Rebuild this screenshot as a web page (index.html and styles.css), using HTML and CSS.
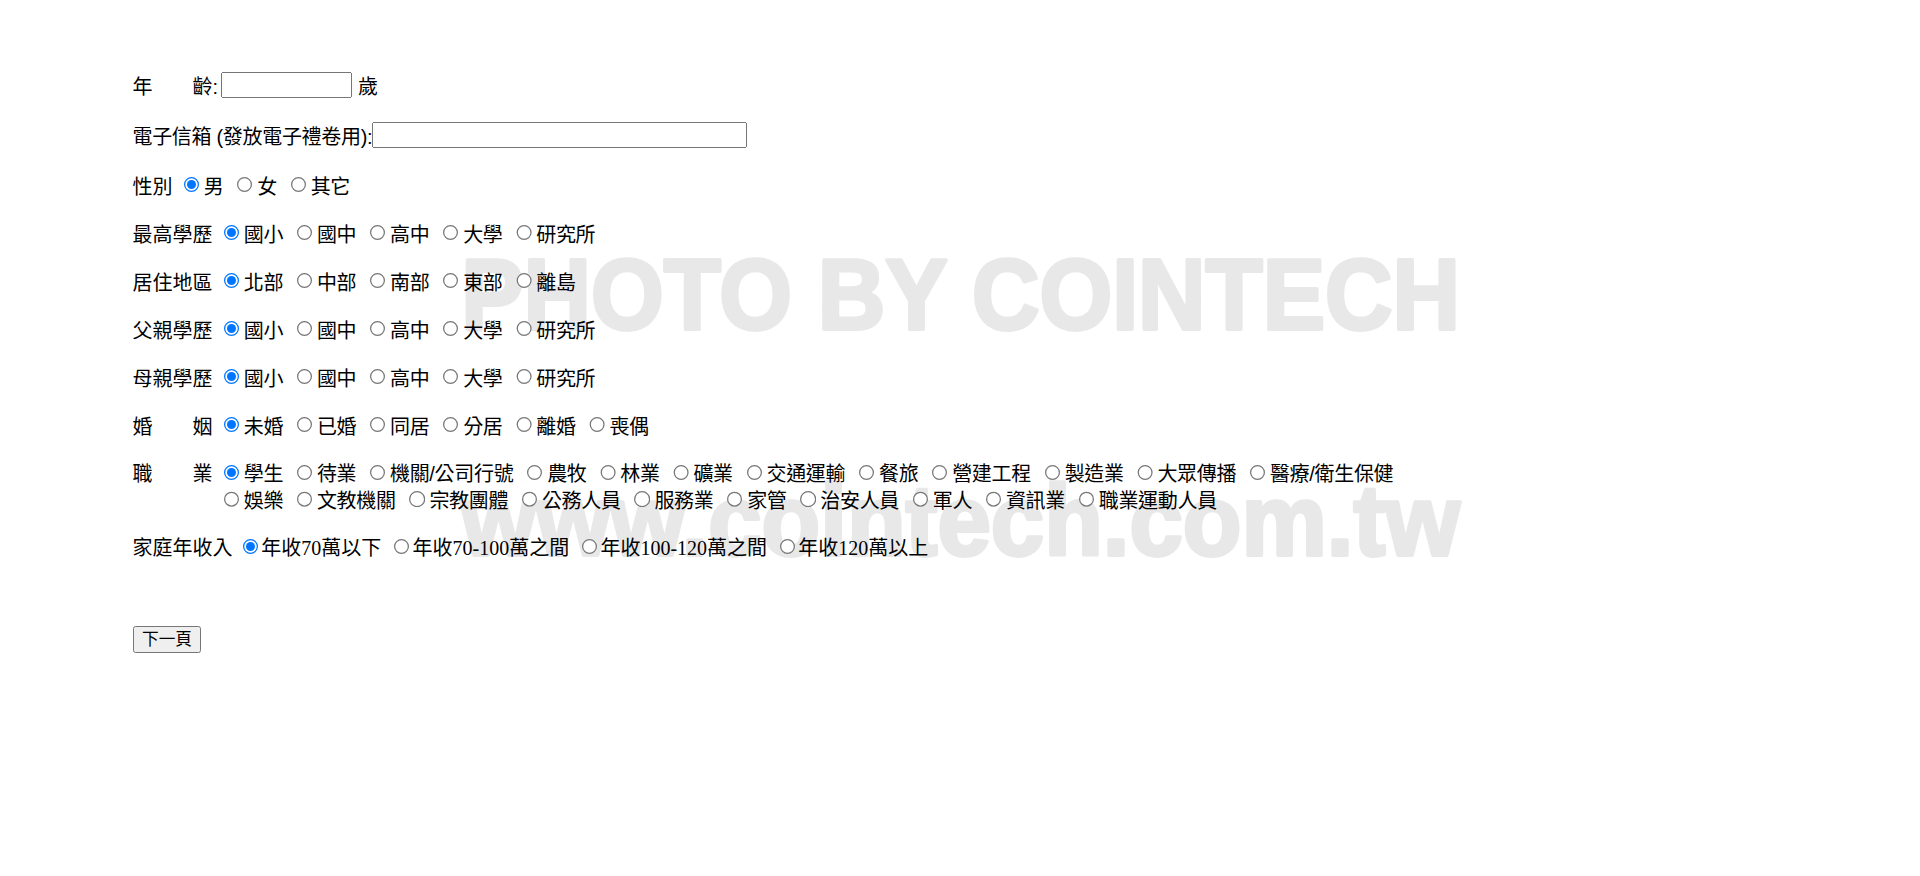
FILE: index.html
```html
<!DOCTYPE html>
<html lang="zh-Hant">
<head>
<meta charset="utf-8">
<title>問卷</title>
<link rel="stylesheet" href="styles.css">
</head>
<body>
<svg class="watermark" width="1536" height="700" viewBox="0 0 1536 700" aria-hidden="true">
  <text x="369" y="263" textLength="799" lengthAdjust="spacingAndGlyphs" class="wm-text">PHOTO BY COINTECH</text>
  <text x="369" y="444" textLength="799" lengthAdjust="spacingAndGlyphs" class="wm-text">www.cointech.com.tw</text>
</svg>
<form class="form">
  <div class="row row-input">
    <span class="lbl-age">年　　齡:</span><input class="txt age" type="text"><span class="unit">歲</span>
  </div>
  <div class="row row-input row-email">
    <span class="lbl-email">電子信箱 (發放電子禮卷用):</span><input class="txt email" type="text">
  </div>
  <div class="row">
    <span class="lbl">性別</span>
    <label class="opt"><input type="radio" name="sex" checked>男</label>
    <label class="opt"><input type="radio" name="sex">女</label>
    <label class="opt"><input type="radio" name="sex">其它</label>
  </div>
  <div class="row">
    <span class="lbl">最高學歷</span>
    <label class="opt"><input type="radio" name="edu" checked>國小</label>
    <label class="opt"><input type="radio" name="edu">國中</label>
    <label class="opt"><input type="radio" name="edu">高中</label>
    <label class="opt"><input type="radio" name="edu">大學</label>
    <label class="opt"><input type="radio" name="edu">研究所</label>
  </div>
  <div class="row">
    <span class="lbl">居住地區</span>
    <label class="opt"><input type="radio" name="area" checked>北部</label>
    <label class="opt"><input type="radio" name="area">中部</label>
    <label class="opt"><input type="radio" name="area">南部</label>
    <label class="opt"><input type="radio" name="area">東部</label>
    <label class="opt"><input type="radio" name="area">離島</label>
  </div>
  <div class="row">
    <span class="lbl">父親學歷</span>
    <label class="opt"><input type="radio" name="fedu" checked>國小</label>
    <label class="opt"><input type="radio" name="fedu">國中</label>
    <label class="opt"><input type="radio" name="fedu">高中</label>
    <label class="opt"><input type="radio" name="fedu">大學</label>
    <label class="opt"><input type="radio" name="fedu">研究所</label>
  </div>
  <div class="row">
    <span class="lbl">母親學歷</span>
    <label class="opt"><input type="radio" name="medu" checked>國小</label>
    <label class="opt"><input type="radio" name="medu">國中</label>
    <label class="opt"><input type="radio" name="medu">高中</label>
    <label class="opt"><input type="radio" name="medu">大學</label>
    <label class="opt"><input type="radio" name="medu">研究所</label>
  </div>
  <div class="row">
    <span class="lbl">婚　　姻</span>
    <label class="opt"><input type="radio" name="mar" checked>未婚</label>
    <label class="opt"><input type="radio" name="mar">已婚</label>
    <label class="opt"><input type="radio" name="mar">同居</label>
    <label class="opt"><input type="radio" name="mar">分居</label>
    <label class="opt"><input type="radio" name="mar">離婚</label>
    <label class="opt"><input type="radio" name="mar">喪偶</label>
  </div>
  <div class="row row-multi">
    <span class="lbl">職　　業</span>
    <div class="lines">
      <div class="line">
        <label class="opt"><input type="radio" name="job" checked>學生</label>
        <label class="opt"><input type="radio" name="job">待業</label>
        <label class="opt"><input type="radio" name="job">機關/公司行號</label>
        <label class="opt"><input type="radio" name="job">農牧</label>
        <label class="opt"><input type="radio" name="job">林業</label>
        <label class="opt"><input type="radio" name="job">礦業</label>
        <label class="opt"><input type="radio" name="job">交通運輸</label>
        <label class="opt"><input type="radio" name="job">餐旅</label>
        <label class="opt"><input type="radio" name="job">營建工程</label>
        <label class="opt"><input type="radio" name="job">製造業</label>
        <label class="opt"><input type="radio" name="job">大眾傳播</label>
        <label class="opt"><input type="radio" name="job">醫療/衛生保健</label>
      </div>
      <div class="line">
        <label class="opt"><input type="radio" name="job">娛樂</label>
        <label class="opt"><input type="radio" name="job">文教機關</label>
        <label class="opt"><input type="radio" name="job">宗教團體</label>
        <label class="opt"><input type="radio" name="job">公務人員</label>
        <label class="opt"><input type="radio" name="job">服務業</label>
        <label class="opt"><input type="radio" name="job">家管</label>
        <label class="opt"><input type="radio" name="job">治安人員</label>
        <label class="opt"><input type="radio" name="job">軍人</label>
        <label class="opt"><input type="radio" name="job">資訊業</label>
        <label class="opt"><input type="radio" name="job">職業運動人員</label>
      </div>
    </div>
  </div>
  <div class="row row-income">
    <span class="lbl">家庭年收入</span>
    <label class="opt"><input type="radio" name="inc" checked>年收70萬以下</label>
    <label class="opt"><input type="radio" name="inc">年收70-100萬之間</label>
    <label class="opt"><input type="radio" name="inc">年收100-120萬之間</label>
    <label class="opt"><input type="radio" name="inc">年收120萬以上</label>
  </div>
  <div class="row-btn">
    <button type="button" class="btn">下一頁</button>
  </div>
</form>
</body>
</html>
```
FILE: styles.css
```css
html {
  zoom: 1.25;
  background: #fff;
}
body {
  margin: 0;
  position: relative;
  color: #000;
  font-family: "Liberation Sans", "Noto Sans CJK TC", sans-serif;
  font-size: 16px;
}
.form {
  position: relative;
  z-index: 1;
  display: flex;
  flex-direction: column;
  padding: 56px 0 0 106px;
}
.row {
  display: flex;
  align-items: center;
  height: 22px;
  margin-bottom: 16.4px;
  white-space: nowrap;
}
.row-input {
  height: 24px;
  margin-bottom: 16px;
}
.row-email {
  margin-bottom: 17px;
}
.lbl-email {
  letter-spacing: -0.25px;
}
.row-multi {
  height: auto;
  align-items: flex-start;
  margin-bottom: 16px;
}
.lines {
  display: flex;
  flex-direction: column;
}
.line {
  display: flex;
  align-items: center;
  height: 21.5px;
}
.row-multi .lbl {
  height: 21.5px;
  display: flex;
  align-items: center;
}
.row-income {
  font-family: "Liberation Serif", "Noto Sans CJK TC", serif;
  margin-bottom: 52.6px;
}
.row-income .lbl {
  font-family: "Liberation Sans", "Noto Sans CJK TC", sans-serif;
  margin-right: 3px;
}
.lbl {
  margin-right: 4px;
}
.opt {
  display: inline-flex;
  align-items: center;
  margin-right: 6px;
  letter-spacing: -0.25px;
}
.opt input {
  margin: 0 3px 0 5px;
  width: 13px;
  height: 13px;
}
.row-income .opt {
  margin-right: 5px;
  letter-spacing: 0;
}
.row-income .opt input {
  margin-right: 2px;
}
.txt {
  box-sizing: border-box;
  height: 21px;
  margin: 0 0 0 2px;
  font-size: 13.33px;
}
.age {
  width: 105px;
}
.email {
  width: 300px;
  margin-left: 0;
}
.unit {
  margin-left: 5px;
}
.row-btn {
  display: flex;
}
.btn {
  font-family: "Liberation Sans", "Noto Sans CJK TC", sans-serif;
  font-size: 13.33px;
  height: 21px;
  padding: 0 6px;
  line-height: 17px;
}
.watermark {
  position: absolute;
  left: 0;
  top: 0;
  z-index: 0;
  pointer-events: none;
}
.wm-text {
  font-family: "Liberation Sans", sans-serif;
  font-weight: 700;
  font-size: 80px;
  fill: #e8e8e8;
  stroke: #e8e8e8;
  stroke-width: 3px;
  stroke-linejoin: round;
  stroke-linecap: round;
}
```
